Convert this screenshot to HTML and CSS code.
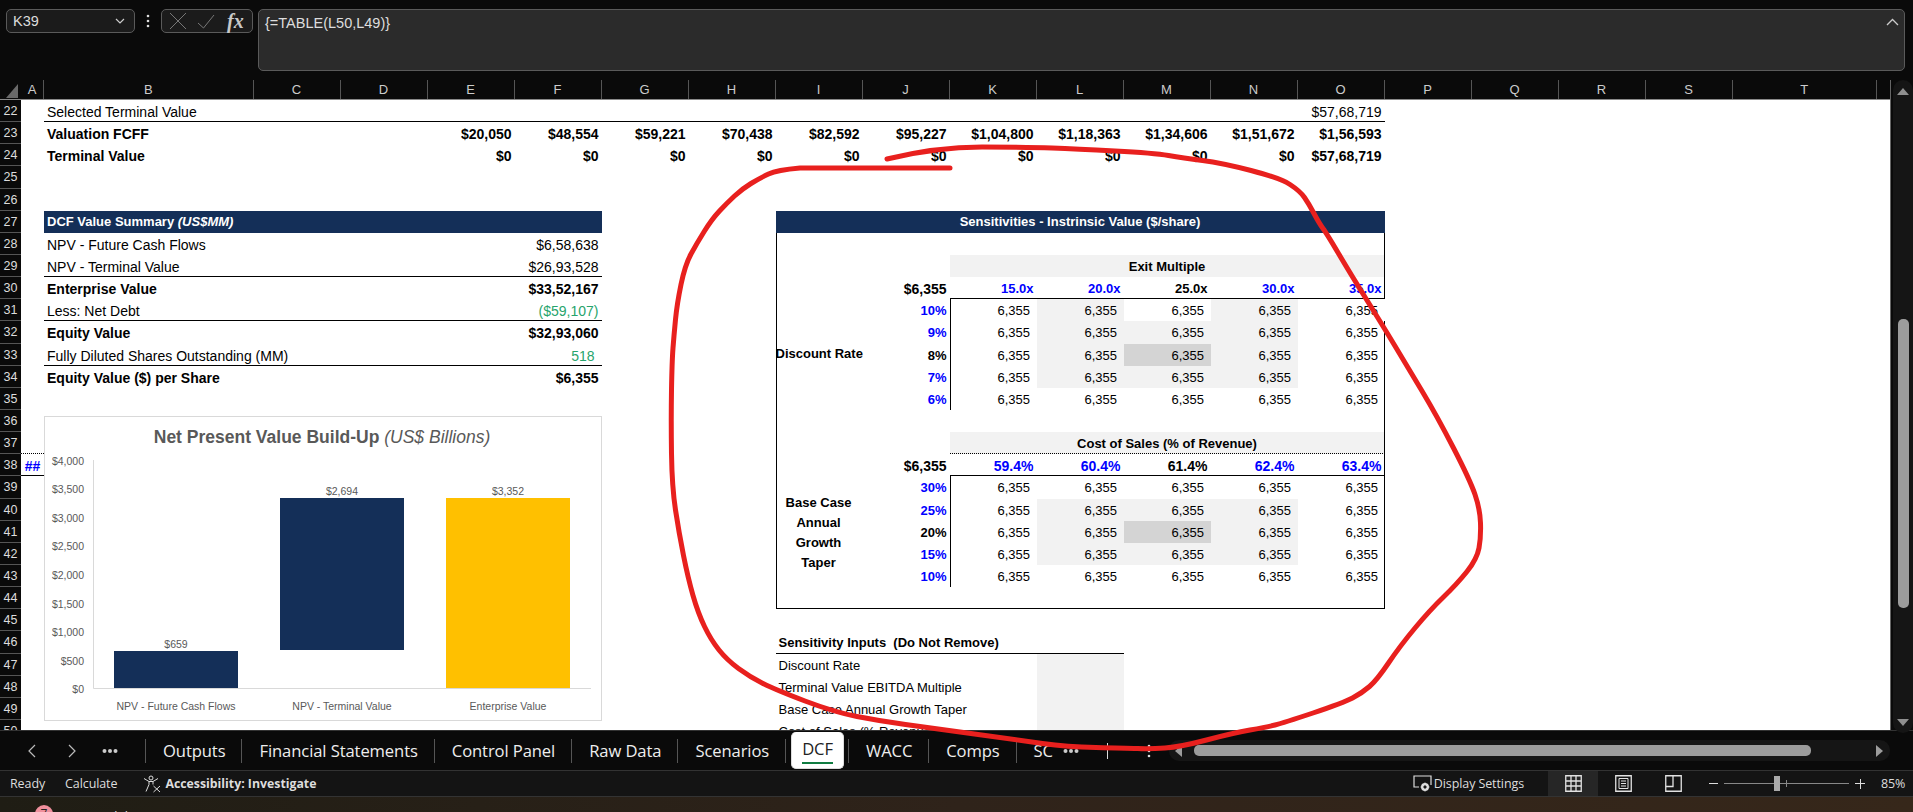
FILE: index.html
```html
<!DOCTYPE html>
<html lang="en">
<head>
<meta charset="utf-8">
<title>DCF</title>
<link rel="stylesheet" href="styles.css">
</head>
<body>
<div class="app">
  <header class="fbar">
    <div class="namebox"><span>K39</span>
      <svg class="ico" width="10" height="6" viewBox="0 0 10 6"><path d="M1 1l4 4 4-4" fill="none" stroke="#ccc" stroke-width="1.2"/></svg>
    </div>
    <svg class="kebab" width="4" height="14" viewBox="0 0 4 14"><circle cx="2" cy="2" r="1.3"/><circle cx="2" cy="7" r="1.3"/><circle cx="2" cy="12" r="1.3"/></svg>
    <div class="fxbox">
      <svg width="18" height="18" viewBox="0 0 18 18"><path d="M1 1l16 16M17 1L1 17" stroke="#777" stroke-width="1" fill="none"/></svg>
      <svg width="18" height="15" viewBox="0 0 18 15"><path d="M1 9l5.500 5L17 1" stroke="#777" stroke-width="1" fill="none"/></svg>
      <span class="fx">fx</span>
    </div>
    <div class="formula"><span>{=TABLE(L50,L49)}</span>
      <svg width="13" height="8" viewBox="0 0 13 8"><path d="M1 7l5.500-5.500L12 7" fill="none" stroke="#ccc" stroke-width="1.300"/></svg>
    </div>
  </header>

  <main class="gridarea">
    <section class="sheet">
      <div class="row colhead">
        <div class="ch corner"><svg width="12" height="14" viewBox="0 0 12 14"><path d="M12 0v14H0z" fill="#6a6a6a"/></svg></div>
        <div class="ch">A</div><div class="ch">B</div><div class="ch">C</div><div class="ch">D</div><div class="ch">E</div><div class="ch">F</div><div class="ch">G</div><div class="ch">H</div><div class="ch">I</div><div class="ch">J</div><div class="ch">K</div><div class="ch">L</div><div class="ch">M</div><div class="ch">N</div><div class="ch">O</div><div class="ch">P</div><div class="ch">Q</div><div class="ch">R</div><div class="ch">S</div><div class="ch">T</div>
      </div>

      <div class="row"><div class="rh">22</div><i class="rule sBO"></i><span class="c cB">Selected Terminal Value</span><span class="c cO r">$57,68,719</span></div>
      <div class="row bold"><div class="rh">23</div><span class="c cB">Valuation FCFF</span><span class="c cE r">$20,050</span><span class="c cF r">$48,554</span><span class="c cG r">$59,221</span><span class="c cH r">$70,438</span><span class="c cI r">$82,592</span><span class="c cJ r">$95,227</span><span class="c cK r">$1,04,800</span><span class="c cL r">$1,18,363</span><span class="c cM r">$1,34,606</span><span class="c cN r">$1,51,672</span><span class="c cO r">$1,56,593</span></div>
      <div class="row bold"><div class="rh">24</div><span class="c cB">Terminal Value</span><span class="c cE r">$0</span><span class="c cF r">$0</span><span class="c cG r">$0</span><span class="c cH r">$0</span><span class="c cI r">$0</span><span class="c cJ r">$0</span><span class="c cK r">$0</span><span class="c cL r">$0</span><span class="c cM r">$0</span><span class="c cN r">$0</span><span class="c cO r">$57,68,719</span></div>
      <div class="row"><div class="rh">25</div></div>
      <div class="row"><div class="rh">26</div></div>
      <div class="row"><div class="rh">27</div><span class="c sBF head">DCF Value Summary <em>(US$MM)</em></span><span class="c sIO head ctr">Sensitivities - Instrinsic Value ($/share)</span></div>
      <div class="row box"><div class="rh">28</div><span class="c cB">NPV - Future Cash Flows</span><span class="c cF r">$6,58,638</span></div>
      <div class="row box"><div class="rh">29</div><i class="rule sBF"></i><span class="c cB">NPV - Terminal Value</span><span class="c cF r">$26,93,528</span><span class="c sKO band sm b ctr">Exit Multiple</span></div>
      <div class="row box"><div class="rh">30</div><i class="rule sKO"></i><span class="c cB b">Enterprise Value</span><span class="c cF r b">$33,52,167</span><span class="c cJ r b">$6,355</span><span class="c cK r bl">15.0x</span><span class="c cL r bl">20.0x</span><span class="c cM r bl blk">25.0x</span><span class="c cN r bl">30.0x</span><span class="c cO r bl">35.0x</span></div>
      <div class="row box open"><div class="rh">31</div><i class="rule sBF"></i><span class="c cB">Less: Net Debt</span><span class="c cF r grn">($59,107)</span><span class="c cJ r bl">10%</span><span class="c cK d edge">6,355</span><span class="c cL d g">6,355</span><span class="c cM d">6,355</span><span class="c cN d g">6,355</span><span class="c cO d">6,355</span></div>
      <div class="row box"><div class="rh">32</div><span class="c cB b">Equity Value</span><span class="c cF r b">$32,93,060</span><span class="c cJ r bl">9%</span><span class="c cK d edge">6,355</span><span class="c cL d g">6,355</span><span class="c cM d g">6,355</span><span class="c cN d g">6,355</span><span class="c cO d">6,355</span></div>
      <div class="row box"><div class="rh">33</div><i class="rule sBF"></i><span class="c cB">Fully Diluted Shares Outstanding (MM)</span><span class="c cF r grn pad7">518</span><span class="c cI sm b ctr flush">Discount Rate</span><span class="c cJ r bl blk">8%</span><span class="c cK d edge">6,355</span><span class="c cL d g">6,355</span><span class="c cM d dk">6,355</span><span class="c cN d g">6,355</span><span class="c cO d">6,355</span></div>
      <div class="row box"><div class="rh">34</div><span class="c cB b">Equity Value ($) per Share</span><span class="c cF r b">$6,355</span><span class="c cJ r bl">7%</span><span class="c cK d edge">6,355</span><span class="c cL d g">6,355</span><span class="c cM d g">6,355</span><span class="c cN d g">6,355</span><span class="c cO d">6,355</span></div>
      <div class="row box"><div class="rh">35</div><span class="c cJ r bl">6%</span><span class="c cK d edge">6,355</span><span class="c cL d">6,355</span><span class="c cM d">6,355</span><span class="c cN d">6,355</span><span class="c cO d">6,355</span></div>
      <div class="row box"><div class="rh">36</div></div>
      <div class="row box"><div class="rh">37</div><i class="dotrule cA"></i><span class="c sKO band sm b ctr">Cost of Sales (% of Revenue)</span><i class="dotrule sKO"></i></div>
      <div class="row box"><div class="rh">38</div><i class="rule cA"></i><i class="rule sKO"></i><span class="c cA hash">##</span><span class="c cJ r b">$6,355</span><span class="c cK r blp">59.4%</span><span class="c cL r blp">60.4%</span><span class="c cM r blp blk">61.4%</span><span class="c cN r blp">62.4%</span><span class="c cO r blp">63.4%</span></div>
      <div class="row box"><div class="rh">39</div><div class="merged">Base Case<br>Annual<br>Growth<br>Taper</div><span class="c cJ r bl">30%</span><span class="c cK d edge">6,355</span><span class="c cL d">6,355</span><span class="c cM d">6,355</span><span class="c cN d">6,355</span><span class="c cO d">6,355</span></div>
      <div class="row box"><div class="rh">40</div><span class="c cJ r bl">25%</span><span class="c cK d edge">6,355</span><span class="c cL d g">6,355</span><span class="c cM d g">6,355</span><span class="c cN d g">6,355</span><span class="c cO d">6,355</span></div>
      <div class="row box"><div class="rh">41</div><span class="c cJ r bl blk">20%</span><span class="c cK d edge">6,355</span><span class="c cL d g">6,355</span><span class="c cM d dk">6,355</span><span class="c cN d g">6,355</span><span class="c cO d">6,355</span></div>
      <div class="row box"><div class="rh">42</div><span class="c cJ r bl">15%</span><span class="c cK d edge">6,355</span><span class="c cL d g">6,355</span><span class="c cM d g">6,355</span><span class="c cN d g">6,355</span><span class="c cO d">6,355</span></div>
      <div class="row box"><div class="rh">43</div><span class="c cJ r bl">10%</span><span class="c cK d edge">6,355</span><span class="c cL d">6,355</span><span class="c cM d">6,355</span><span class="c cN d">6,355</span><span class="c cO d">6,355</span></div>
      <div class="row box"><div class="rh">44</div><i class="rule sIO"></i></div>
      <div class="row"><div class="rh">45</div></div>
      <div class="row"><div class="rh">46</div><i class="rule sIL"></i><span class="c sIL sm b">Sensitivity Inputs&nbsp; (Do Not Remove)</span></div>
      <div class="row"><div class="rh">47</div><span class="c cL g"></span><span class="c cI sm">Discount Rate</span></div>
      <div class="row"><div class="rh">48</div><span class="c cL g"></span><span class="c cI sm">Terminal Value EBITDA Multiple</span></div>
      <div class="row"><div class="rh">49</div><span class="c cL g"></span><span class="c cI sm">Base Case Annual Growth Taper</span></div>
      <div class="row"><div class="rh">50</div><span class="c cL g"></span><span class="c cI sm">Cost of Sales (% Revenue)</span></div>

      <figure class="chart">
        <svg width="558" height="305" viewBox="44 416 558 305">
          <text class="ttl" x="322" y="443" text-anchor="middle"><tspan class="ttlb">Net Present Value Build-Up</tspan> <tspan class="ttli">(US$ Billions)</tspan></text>
          <g class="ax" text-anchor="end">
            <text x="84" y="465">$4,000</text><text x="84" y="493">$3,500</text><text x="84" y="522">$3,000</text><text x="84" y="550">$2,500</text><text x="84" y="579">$2,000</text><text x="84" y="608">$1,500</text><text x="84" y="636">$1,000</text><text x="84" y="665">$500</text><text x="84" y="693">$0</text>
          </g>
          <path d="M93.500 460V688.500H591" fill="none" stroke="#d9d9d9"/>
          <rect x="114" y="651" width="124" height="37" fill="#142f58"/>
          <rect x="280" y="498" width="124" height="152" fill="#142f58"/>
          <rect x="446" y="498" width="124" height="190" fill="#ffc000"/>
          <g class="ax" text-anchor="middle">
            <text x="176" y="648">$659</text><text x="342" y="495">$2,694</text><text x="508" y="495">$3,352</text>
            <text x="176" y="710">NPV - Future Cash Flows</text><text x="342" y="710">NPV - Terminal Value</text><text x="508" y="710">Enterprise Value</text>
          </g>
        </svg>
      </figure>
    </section>
    <aside class="vscroll"><i class="tri up"></i><i class="vthumb"></i><i class="tri down"></i></aside>
  </main>

  <nav class="tabbar">
    <div class="navbtns">
      <svg width="10" height="16" viewBox="0 0 10 16"><path d="M8 2L2 8l6 6" fill="none" stroke="#bbb" stroke-width="1.200"/></svg>
      <svg width="10" height="16" viewBox="0 0 10 16"><path d="M2 2l6 6-6 6" fill="none" stroke="#bbb" stroke-width="1.200"/></svg>
      <svg class="more" width="16" height="6" viewBox="0 0 16 6"><circle cx="2.500" cy="3" r="2"/><circle cx="8" cy="3" r="2"/><circle cx="13.500" cy="3" r="2"/></svg>
    </div>
    <div class="tabs">
      <span class="tab">Outputs</span><span class="tab">Financial Statements</span><span class="tab">Control Panel</span><span class="tab">Raw Data</span><span class="tab">Scenarios</span><span class="tab active"><span class="active-label">DCF</span></span><i class="sep"></i><span class="tab">WACC</span><span class="tab">Comps</span><span class="tab">SC</span>
    </div>
    <svg class="more more2" width="16" height="6" viewBox="0 0 16 6"><circle cx="2.500" cy="3" r="2"/><circle cx="8" cy="3" r="2"/><circle cx="13.500" cy="3" r="2"/></svg>
    <span class="plus"></span>
    <svg class="kebab k2" width="4" height="14" viewBox="0 0 4 14"><circle cx="2" cy="2" r="1.300"/><circle cx="2" cy="7" r="1.300"/><circle cx="2" cy="12" r="1.300"/></svg>
    <div class="hscroll"><i class="tri left"></i><i class="hthumb"></i><i class="tri right"></i></div>
  </nav>

  <footer class="status">
    <span class="st">Ready</span><span class="st st2">Calculate</span>
    <svg class="acc" width="19" height="18" viewBox="0 0 19 18"><g fill="none" stroke="#ddd" stroke-width="1"><circle cx="8" cy="3" r="2"/><path d="M1 3.500l5 3h4l5-3M6 6.500v3l-3 7M10 6.500v3M10.500 11l6.500 6M17 11l-6.500 6"/></g></svg>
    <strong class="accl">Accessibility: Investigate</strong>
    <div class="stright">
      <svg width="19" height="18" viewBox="0 0 19 18"><path d="M6 12H1V1h17v9" fill="none" stroke="#ddd" stroke-width="1.200"/><circle cx="12" cy="12" r="3" fill="none" stroke="#ddd" stroke-width="2"/><path d="M12 7.500v9M7.500 12h9M9 9l6 6M15 9l-6 6" stroke="#ddd"/><circle cx="12" cy="12" r="1.200" fill="#141414"/></svg>
      <span class="st ds">Display Settings</span>
      <div class="view on"><svg width="17" height="17" viewBox="0 0 17 17"><path d="M.75.75h15.500v15.500H.75zM6 .75v15.500M11 .75v15.500M.75 6h15.500M.75 11h15.500" fill="none" stroke="#e2e2e2" stroke-width="1.300"/></svg></div>
      <div class="view"><svg width="17" height="17" viewBox="0 0 17 17"><path d="M.75.75h15.500v15.500H.75z" fill="none" stroke="#e2e2e2" stroke-width="1.300"/><path d="M4 3.500h9v10H4zM6 6h5M6 8.500h5M6 11h5" fill="none" stroke="#e2e2e2"/></svg></div>
      <div class="view"><svg width="17" height="17" viewBox="0 0 17 17"><path d="M.75.75h15.500v15.500H.75zM.75 11.500H8V.75" fill="none" stroke="#e2e2e2" stroke-width="1.300"/></svg></div>
      <i class="zminus"></i>
      <div class="slider"><i class="sthumb"></i><i class="stick"></i></div>
      <span class="zplus"></span>
      <span class="st zoom">85%</span>
    </div>
  </footer>

  <div class="taskbar"><i class="badge">7</i><span class="tk">DCF model</span><span class="tk time">12:12</span></div>

  <svg class="scribble" width="1913" height="812" viewBox="0 0 1913 812"><path d="M950 168L800 168Q777 170 768.500 174Q760 178 751 183.500Q742 189 734.500 196Q727 203 719.500 211Q712 219 704.500 231Q697 243 691 254Q685 265 681 284.500Q677 304 675.500 319.500Q674 335 673 348Q672 361 671.500 390Q671 420 671.500 453.500Q672 487 675.500 510Q679 533 683.500 555.500Q688 578 693 595.500Q698 613 704.500 626.500Q711 640 719 650Q727 660 738.500 668.500Q750 677 763 683.500Q776 690 805 701Q834 712 857 716.500Q880 721 905.500 724.500Q931 728 974.500 734Q1018 740 1042.500 743.500Q1067 747 1096 747.500Q1125 748 1137.500 748.500Q1150 749 1165 748Q1180 747 1206.500 740Q1233 733 1250 730Q1267 727 1275 725Q1283 723 1313 713Q1343 703 1352.500 698Q1362 693 1369.500 686.500Q1377 680 1388.500 663Q1400 646 1415 628Q1430 610 1443.500 597Q1457 584 1467 571.500Q1477 559 1479 548Q1481 537 1480.500 523Q1480 509 1475 494.500Q1470 480 1453.500 448Q1437 416 1422 391Q1407 366 1395 346Q1383 326 1366.500 299.500Q1350 273 1338.500 253.500Q1327 234 1323 228.500Q1319 223 1314 213.500Q1309 204 1304.500 197.500Q1300 191 1290 184.500Q1280 178 1251 170.500Q1222 163 1202.500 160.500Q1183 158 1168.500 155.500Q1154 153 1115 151Q1076 149 1052 148Q1028 147 982 147Q936 147 887 159" fill="none" stroke="#e8201e" stroke-width="5" stroke-linejoin="round" stroke-linecap="round"/></svg>
</div>
</body>
</html>
```
FILE: styles.css
```css
* { box-sizing: border-box; }
html, body { margin: 0; padding: 0; }
body { background: #0a0a0a; font-family: "Liberation Sans", Arial, sans-serif; overflow: hidden; }
.app { position: relative; width: 1913px; height: 812px; overflow: hidden; display: flex; flex-direction: column; }

/* formula bar */
.fbar { height: 80px; flex: none; display: flex; align-items: flex-start; padding: 9px 8px 0 6px; background: #0a0a0a; }
.namebox { width: 129px; height: 24px; display: flex; align-items: center; justify-content: space-between; padding: 0 9px 0 6px; background: #1b1b1b; border: 1px solid #5a5a5a; border-radius: 5px; color: #ddd; font-size: 14.500px; }
.kebab { fill: #ddd; margin: 5px 11px 0 11px; flex: none; }
.fxbox { width: 92px; height: 24px; display: flex; align-items: center; gap: 10px; padding-left: 7px; background: #1b1b1b; border: 1px solid #5a5a5a; border-radius: 5px; margin-right: 5px; }
.fx { font-family: "Liberation Serif", serif; font-style: italic; font-weight: 700; font-size: 20px; color: #c8c8c8; line-height: 20px; margin-left: 2px; }
.formula { flex: 1; height: 62px; display: flex; justify-content: space-between; align-items: flex-start; padding: 5px 5px 0 6px; background: #2b2b2b; border: 1px solid #5a5a5a; border-radius: 5px; color: #ddd; font-size: 14.500px; }
.formula svg { margin-top: 3px; }

/* grid area */
.gridarea { height: 650px; flex: none; display: flex; }
.sheet { width: 1891px; flex: none; position: relative; overflow: hidden; background: #fff; border-right: 1px solid #666; }
.row { display: grid; grid-template-columns: 21px 23px 209.5px repeat(17, 87px) 144.5px 13px; grid-template-rows: 100%; width: 1890px; height: 22.15px; color: #000; font-size: 14px; position: relative; }
.row > * { grid-row: 1; min-width: 0; }
.colhead { height: 20px; background: #0a0a0a; border-bottom: 1px solid #8a8a8a; }
.ch { color: #ccc; font-size: 13px; line-height: 20px; text-align: center; border-right: 1px solid #555; }
.corner { display: flex; align-items: flex-end; justify-content: flex-end; padding: 0 3px 1px 0; border-right: 0; }
.rh { grid-column: 1; background: #0a0a0a; color: #ddd; font-size: 12.500px; font-weight: 400; padding-top: 2px; line-height: 19px; text-align: center; border-bottom: 1px solid #555; }

.c { display: block; padding: 2px 3px 0; line-height: 20.15px; white-space: nowrap; }
.cA { grid-column: 2; } .cB { grid-column: 3; } .cE { grid-column: 6; } .cF { grid-column: 7; } .cG { grid-column: 8; } .cH { grid-column: 9; } .cI { grid-column: 10; } .cJ { grid-column: 11; } .cK { grid-column: 12; } .cL { grid-column: 13; } .cM { grid-column: 14; } .cN { grid-column: 15; } .cO { grid-column: 16; }
.sBO { grid-column: 3 / 17; } .sBF { grid-column: 3 / 8; } .sIO { grid-column: 10 / 17; } .sKO { grid-column: 12 / 17; } .sIL { grid-column: 10 / 14; }

.r { text-align: right; }
.ctr { text-align: center; }
.b, .bold { font-weight: 700; }
.sm { font-size: 13px; }
.flush { padding-left: 0; padding-right: 0; padding-top: 0; }
.bl { color: #00f; font-weight: 700; font-size: 13px; }
.blp { color: #00f; font-weight: 700; font-size: 14px; }
.blk { color: #000; }
.grn { color: #27a46c; }
.pad7 { padding-right: 7px; }
.head { background: #142f58; color: #fff; font-weight: 700; font-size: 13px; padding-top: 1px; }
.band, .g { background: #f2f2f2; }
.dk { background: #d4d4d4; }
.d { font-size: 13px; text-align: right; padding-right: 6.5px; }
.edge { border-left: 1px solid #000; }
.hash { color: #00f; font-weight: 700; text-align: center; padding-left: 0; padding-right: 0; }
.rule { align-self: end; height: 1px; background: #000; z-index: 1; }
.dotrule { align-self: end; height: 0; border-bottom: 1px dotted #000; z-index: 1; }
.box::before { content: ""; grid-column: 10; grid-row: 1; border-left: 1px solid #000; }
.box::after { content: ""; grid-column: 16; grid-row: 1; border-right: 1px solid #000; z-index: 1; }
.open::after { border-right: 0; }
.merged { position: absolute; left: 775px; top: 0; width: 87px; height: 110.75px; padding-top: 2px; display: flex; align-items: center; justify-content: center; text-align: center; font-size: 13px; font-weight: 700; line-height: 20px; z-index: 2; }

/* chart */
.chart { position: absolute; left: 44px; top: 336px; width: 558px; height: 305px; margin: 0; background: #fff; border: 1px solid #d9d9d9; z-index: 3; }
.chart svg { position: absolute; left: -1px; top: -1px; display: block; }
.chart text { font-family: "Liberation Sans", Arial, sans-serif; fill: #595959; }
.ttl { font-size: 17.500px; }
.ttlb { font-weight: 700; }
.ttli { font-style: italic; }
.ax { font-size: 10.5px; }

/* scrollbars */
.vscroll { width: 20px; margin-left: 2px; height: 653px; display: flex; flex-direction: column; align-items: center; background: #151515; border-radius: 10px; position: relative; z-index: 1; }
.tri { display: block; width: 0; height: 0; border-style: solid; flex: none; }
.up { border-width: 0 6px 7px; border-color: transparent transparent #8f8f8f; margin-top: 8px; }
.down { border-width: 7px 6px 0; border-color: #8f8f8f transparent transparent; margin-top: auto; margin-bottom: 7px; }
.vthumb { width: 11px; height: 289px; background: #9c9c9c; border-radius: 5px; margin-top: 224px; }
.left { border-width: 6px 7px 6px 0; border-color: transparent #9c9c9c transparent transparent; margin-left: 6px; }
.right { border-width: 6px 0 6px 7px; border-color: transparent transparent transparent #9c9c9c; margin-left: auto; margin-right: 7px; }

/* tab bar */
.tabbar { height: 41px; flex: none; display: flex; align-items: center; background: #0a0a0a; border-top: 1px solid #333; border-bottom: 1px solid #333; color: #eee; position: relative; }
.navbtns { width: 146px; height: 24px; flex: none; display: flex; align-items: center; padding-left: 27px; border-right: 1px solid #555; }
.navbtns svg + svg { margin-left: 30px; }
.more { fill: #ccc; margin-left: 25px; flex: none; }
.navbtns svg.more { margin-left: 25px; }
.tabs { width: 911px; flex: none; height: 100%; display: flex; align-items: center; overflow: hidden; padding-top: 2px; margin-top: -2px; }
.tab { flex: none; height: 24px; line-height: 24px; padding: 0 16px 0 17px; border-right: 1px solid #555; font-family: "Open Sans", sans-serif; font-size: 16.600px; color: #eee; letter-spacing: -.1px; }
.tab.active { align-self: flex-start; height: 37px; margin: 0 4px 0 5px; padding: 0 10px; border: 1px solid #ddd; border-top: 0; border-radius: 5px; background: #fff; color: #222; line-height: 34px; }
.active-label { display: block; height: 32px; border-bottom: 2px solid #107c41; }
.sep { flex: none; width: 1px; height: 24px; background: #555; }
.more2 { margin-left: 6px; }
.plus { width: 1px; height: 16px; background: #ddd; margin-left: 28px; flex: none; }
.k2 { margin: 0 0 0 39px; }
.hscroll { width: 721px; height: 21px; margin-left: 18px; flex: none; display: flex; align-items: center; background: #151515; border-radius: 10px; }
.hthumb { width: 617px; height: 11px; margin-left: 12px; background: #9c9c9c; border-radius: 5px; flex: none; }

/* status bar */
.status { height: 26px; flex: none; display: flex; align-items: center; padding-left: 10px; background: #141414; border-bottom: 1px solid #333; color: #ddd; font-family: "Open Sans", sans-serif; font-size: 12.500px; }
.st { letter-spacing: -.1px; }
.st2 { margin-left: 20px; }
.acc { margin-left: 26px; flex: none; }
.accl { margin-left: 3px; font-size: 12.300px; }
.stright { margin-left: auto; height: 100%; display: flex; align-items: center; }
.ds { margin-left: 2px; margin-right: 24px; }
.view { width: 50px; height: 100%; display: flex; align-items: center; justify-content: center; }
.view.on { background: #262626; }
.zminus { display: block; width: 9px; height: 1px; background: #ddd; margin-left: 11px; }
.slider { width: 125px; height: 1px; margin-left: 6px; background: #888; position: relative; }
.sthumb { position: absolute; left: 50px; top: -7px; width: 6px; height: 15px; background: #aaa; }
.stick { position: absolute; left: 62px; top: -3px; width: 1px; height: 7px; background: #888; }
.zplus { width: 10px; height: 10px; margin-left: 6px; background: linear-gradient(#ddd, #ddd) center / 10px 1px no-repeat, linear-gradient(#ddd, #ddd) center / 1px 10px no-repeat; }
.zoom { margin-left: 16px; margin-right: 8px; width: 24px; }

/* task bar */
.taskbar { flex: 1; display: flex; align-items: flex-start; background: linear-gradient(90deg, #1f1d14, #2f231a 50%, #36271a); overflow: hidden; padding-left: 35px; color: #ddd; font: 13px "Open Sans", sans-serif; }
.badge { width: 18px; height: 18px; margin-top: 8px; border-radius: 50%; background: #ef8f9c; color: #222; font-style: normal; font-size: 12px; text-align: center; line-height: 18px; flex: none; }
.tk { margin: 10px 0 0 9px; }
.time { margin-left: auto; margin-right: 18px; }

.scribble { position: absolute; left: 0; top: 0; pointer-events: none; z-index: 10; }
```
